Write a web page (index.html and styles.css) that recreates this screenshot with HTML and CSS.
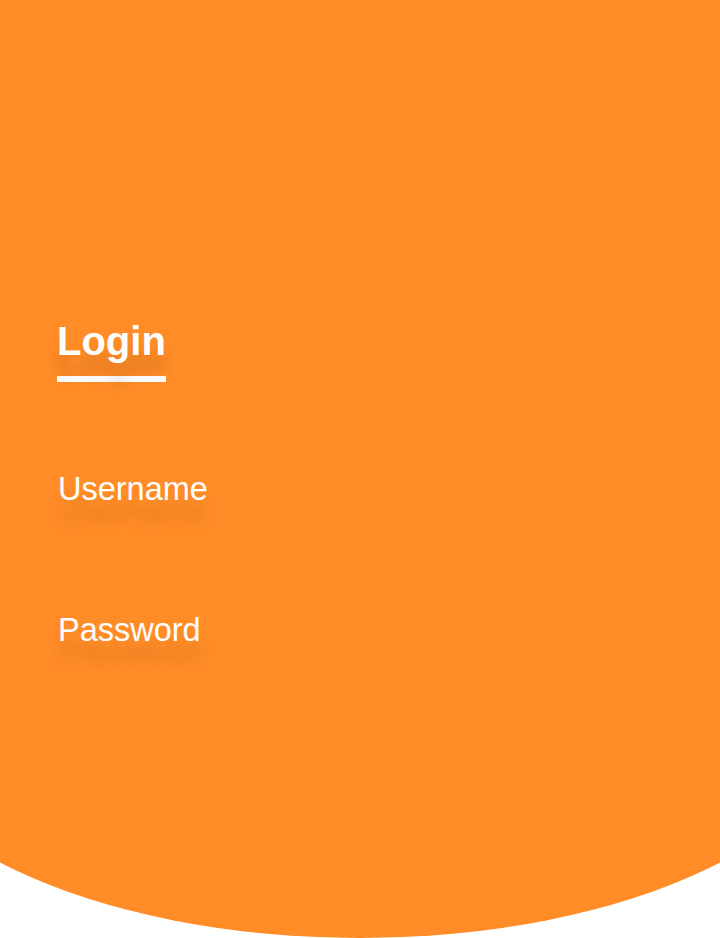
FILE: index.html
```html
<!DOCTYPE html>
<html lang="en">
<head>
<meta charset="utf-8">
<title>Login</title>
<link rel="stylesheet" href="styles.css">
</head>
<body>
<div class="screen">
  <main class="shape">
    <form class="login">
      <h2 class="title">Login</h2>
      <label class="field field-user">Username</label>
      <label class="field field-pass">Password</label>
    </form>
  </main>
</div>
</body>
</html>
```
FILE: styles.css
```css
html, body {
  margin: 0;
  padding: 0;
  background: #ffffff;
}
body {
  font-family: "Liberation Sans", Arial, sans-serif;
}
.screen {
  width: 720px;
  height: 938px;
  overflow: hidden;
}
.shape {
  box-sizing: border-box;
  width: 980px;
  height: 938px;
  margin-left: -130px;
  padding: 318px 0 0 187px;
  background: #ff8c27;
  border-radius: 0 0 50% 50% / 0 0 25% 25%;
}
.login {
  display: flex;
  flex-direction: column;
  align-items: flex-start;
}
.title {
  margin: 0;
  font-size: 40px;
  line-height: 46px;
  font-weight: bold;
  color: #ffffff;
  padding-bottom: 12px;
  border-bottom: 6px solid #ffffff;
  text-shadow: 0 20px 14px rgba(0, 0, 0, 0.14);
}
.field {
  display: block;
  font-size: 32.5px;
  line-height: 36px;
  padding-left: 1px;
  color: #ffffff;
  text-shadow: 0 22px 14px rgba(0, 0, 0, 0.13);
}
.field-user {
  margin-top: 89px;
}
.field-pass {
  margin-top: 105px;
}
```
